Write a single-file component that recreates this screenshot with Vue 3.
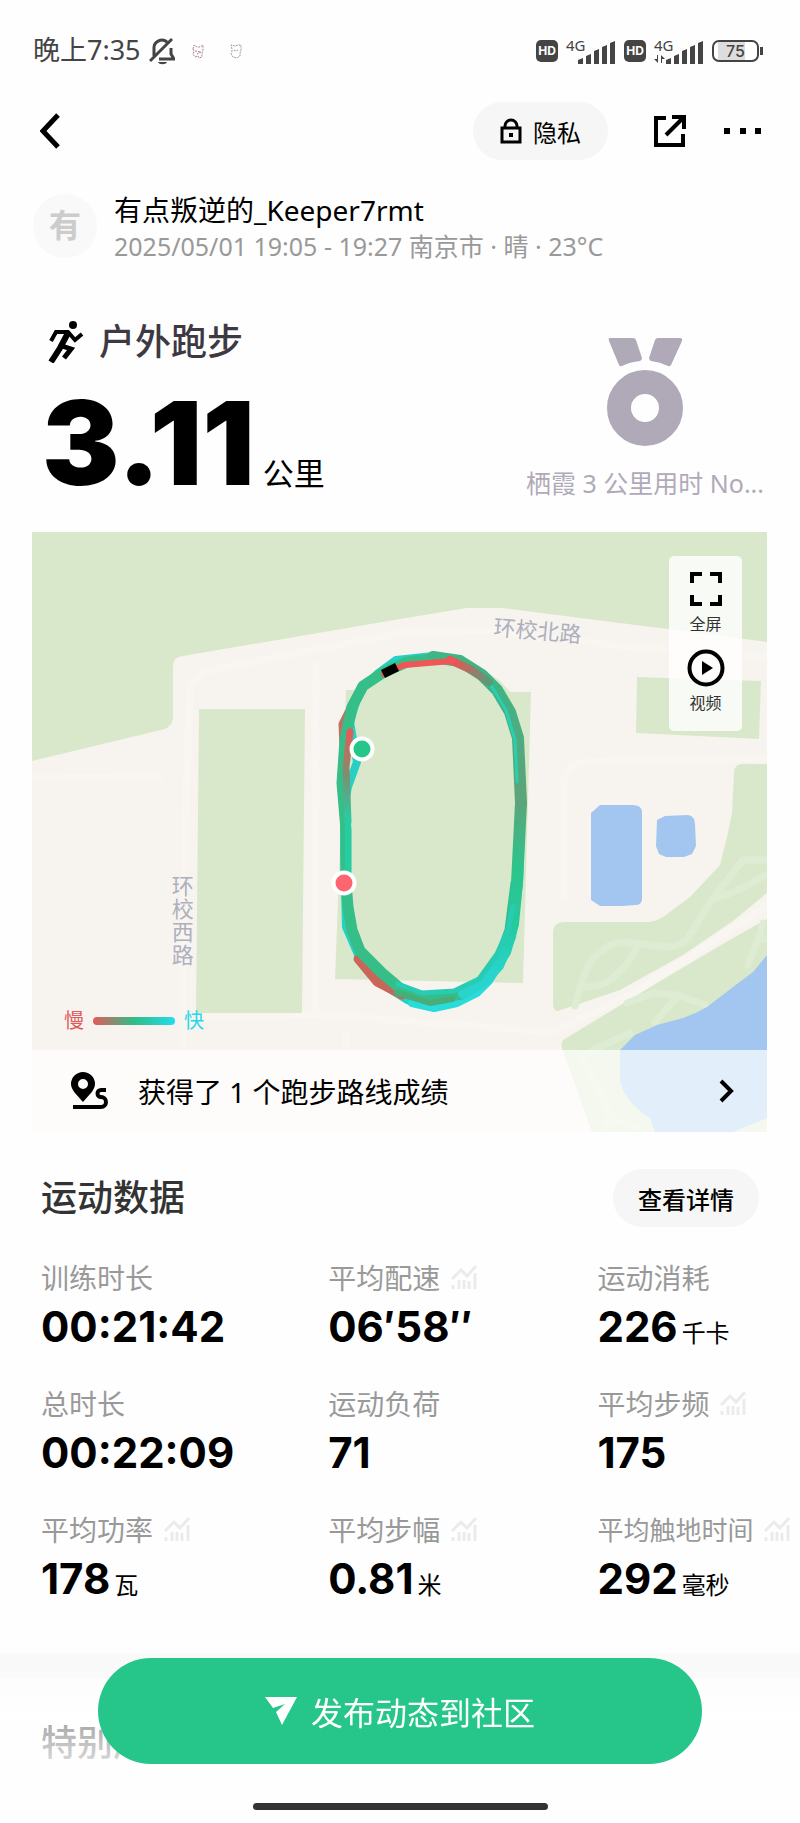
<template>
  <div class="run-page">
    <!-- 系统状态栏 -->
    <div class="status-bar">
      <div class="status-left">
        <span class="status-time">晚上7:35</span>
        <svg class="icon-mute" viewBox="0 0 26 28" fill="none" stroke="#444" stroke-width="3">
          <path d="M5 19V12a8 8 0 0 1 13-7M10 22h15l-3-5v-6M1 24L23 2" />
          <path d="M9 25h9c-1 3-8 3-9 0z" fill="#444" stroke="none" />
        </svg>
        <svg class="icon-pet" viewBox="0 0 14 16" fill="none" stroke="#a5888c" stroke-dasharray="2 1">
          <path d="M2 6l1-4 3 2h3l3-2v5l-1 3v4l-3 1-1-2-3 1-2-3 1-3z" />
          <path d="M4 8l6 1-4 2" stroke="#c0777d" />
        </svg>
        <svg class="icon-pet" viewBox="0 0 14 16" fill="none" stroke="#999" stroke-dasharray="2 1">
          <path d="M3 6l-1-4 4 1 3-1 3 0v5l-1 3v3l-3 2-4-1-2-3 1-3zM5 7l2 1 2-1" />
        </svg>
      </div>
      <div class="status-right">
        <template v-for="sim in sims" :key="sim.id">
          <span class="hd-badge">HD</span>
          <svg class="icon-signal" viewBox="0 0 50 28" fill="#444">
            <text x="0" y="14" font-size="15">4G</text>
            <path v-if="sim.active" d="M4 18v8l-4-4h3v-4zM7 26v-8l4 4H8v4z" />
            <path d="M12 27v-4l5-2v6zM20 27v-8l5-2v10zM28 27V14l5-2v15zM36 27V10l5-2v19zM44 27V6l5-2v23z" />
          </svg>
        </template>
        <span class="battery"><span class="battery-box">75</span></span>
      </div>
    </div>

    <!-- 导航栏 -->
    <nav class="nav-bar">
      <button class="icon-btn" aria-label="返回">
        <svg width="20" height="36" viewBox="0 0 20 36" fill="none" stroke="#000" stroke-width="5">
          <path d="M18 2L3 18l15 16" />
        </svg>
      </button>
      <div class="nav-actions">
        <button class="pill privacy-btn">
          <svg width="22" height="26" viewBox="0 0 22 26" fill="none" stroke="#000" stroke-width="3">
            <path d="M2 10h18v14H2zM5 10V8a6 6 0 0 1 12 0v2" />
            <path d="M9 15h4v4H9z" fill="#000" stroke="none" />
          </svg>
          隐私
        </button>
        <button class="icon-btn" aria-label="分享">
          <svg width="34" height="34" viewBox="0 0 34 34" fill="none" stroke="#000" stroke-width="4">
            <path d="M13 4H3v27h27V20M19 3h12v12M31 3L13 21" />
          </svg>
        </button>
        <button class="icon-btn" aria-label="更多">
          <svg width="38" height="8" viewBox="0 0 38 8">
            <path d="M0 1h6v6H0zM16 1h6v6h-6zM31 1h6v6h-6z" />
          </svg>
        </button>
      </div>
    </nav>

    <!-- 用户信息 -->
    <section class="user-row">
      <div class="avatar">有</div>
      <div class="user-info">
        <div class="user-name">有点叛逆的_Keeper7rmt</div>
        <div class="user-meta">2025/05/01 19:05 - 19:27 南京市 · 晴 · 23°C</div>
      </div>
    </section>

    <!-- 概要 -->
    <section class="summary">
      <div class="summary-main">
        <h1 class="sport-type">
          <svg width="36" height="42" viewBox="0 0 36 42" fill="none" stroke="#000">
            <circle cx="25" cy="4" r="4" fill="#000" stroke="none" />
            <path d="M3 20l5-9h12l7 8 7-6" stroke-width="4" />
            <path d="M20 12l-8 15L3 41" stroke-width="6" />
            <path d="M14 25l9 3-7 9" stroke-width="5" />
          </svg>
          户外跑步
        </h1>
        <div class="distance">
          <span class="distance-value">3.11</span>
          <span class="distance-unit">公里</span>
        </div>
      </div>
      <div class="medal">
        <svg width="76" height="110" viewBox="0 0 76 110" fill="#b0aab8">
          <path d="M3 1h23q2 0 3 2l6 18q0 2-2 3-10 1-18 5-2 1-3-1L2 4q-1-3 1-3zM73 1H51q-2 0-3 2l-6 18q0 2 2 3 9 1 17 5 2 1 3-1L75 4q1-3-2-3z" />
          <circle cx="38" cy="71" r="26" fill="none" stroke="#b0aab8" stroke-width="24" />
        </svg>
        <span>栖霞 3 公里用时 No...</span>
      </div>
    </section>

    <!-- 轨迹地图 -->
    <section class="map-card">
      <svg class="map" viewBox="0 0 735 600">
        <defs>
          <linearGradient id="leftSide" gradientUnits="userSpaceOnUse" x1="0" y1="195" x2="0" y2="290">
            <stop offset="0" stop-color="#f05656" />
            <stop offset="0.5" stop-color="#7e8e70" />
            <stop offset="1" stop-color="#24cfa4" />
          </linearGradient>
          <linearGradient id="topSide" gradientUnits="userSpaceOnUse" x1="420" y1="0" x2="462" y2="0">
            <stop offset="0" stop-color="#ee5252" />
            <stop offset="1" stop-color="#4aa27c" />
          </linearGradient>
          <linearGradient id="rightSide" gradientUnits="userSpaceOnUse" x1="0" y1="150" x2="0" y2="440">
            <stop offset="0" stop-color="#3fb484" />
            <stop offset="0.4" stop-color="#5da479" />
            <stop offset="0.65" stop-color="#2cc48c" />
            <stop offset="0.85" stop-color="#24cba0" />
            <stop offset="1" stop-color="#28d4cc" />
          </linearGradient>
        </defs>
        <rect width="735" height="600" fill="#f7f4ef" />

        <!-- 道路 -->
        <g fill="none" stroke="#f9f6f2" stroke-width="7">
          <path d="M0 246L130 245M150 600L153 290 158 160Q160 144 180 138L368 101 450 98 600 115 735 126" />
          <path d="M284 130L283 482M164 485L284 482 520 500M520 500L600 462 735 374M314 500V600" />
          <path d="M532 370V248Q534 231 552 230L735 226" />
        </g>

        <!-- 绿地 -->
        <g fill="#d9e8ca">
          <path d="M0 0H735V110L635 97 471 76H435L368 87 151 124Q141 125 141 134V186Q140 194 133 197L0 229z" />
          <path d="M167 177H273L270 481H164z" />
          <path d="M314 158H325L345 143 370 130 401 126 430 128 455 140 468 149 478 160H499L491 451 303 447z" />
          <path d="M605 145L729 149 727 207 604 201z" />
          <path d="M735 232H710Q703 232 702 240L700 281 695 305 688 333 658 365 631 385Q625 389 618 390H531Q521 391 521 400V472Q521 479 526 479L588 458 651 423 701 389 735 361z" />
          <path d="M735 387L701 406 635 445 531 508Q529 512 530 516L560 600H735z" />
        </g>
        <g fill="none" stroke="#dfecd4" stroke-width="7" stroke-linecap="round" stroke-linejoin="round">
          <path d="M733 328H711L681 366 656 406Q650 414 635 415L601 411Q580 409 572 417 560 425 555 436L548 455 543 474" />
          <path d="M681 366Q701 363 733 343M606 411Q600 432 575 450 562 456 548 455" />
          <path d="M595 471L621 461 645 463 673 473M645 465L623 490M598 501L561 518Q550 525 551 531L571 565 578 586 608 596M578 586L570 600" />
          <path d="M731 391L726 408 716 433M726 408L735 406" />
        </g>

        <!-- 水域 -->
        <g fill="#a2c6f0">
          <path d="M735 423L721 440 701 455 675 475Q663 482 651 486L625 493 603 503 588 518V545Q588 555 595 565 605 579 618 586L623 600H701L735 586z" />
          <path d="M568 273H600Q610 273 610 280V368Q609 373 604 373L590 374H568L559 368V281z" />
          <path d="M633 284L656 283Q663 284 663 292L664 314 660 322 652 325H634L627 322 624 314 625 288z" />
        </g>

        <text class="road-name" x="461" y="103" transform="rotate(5 461 103)">环校北路</text>

        <!-- 跑步轨迹 -->
        <g fill="none" stroke-linejoin="round" stroke-linecap="round">
          <path d="M316 255L325 230 318 190 327 160 345 142 364 128 401 124 428 128 448 140 466 162 482 188 488 230 490 271 487 351 480 405 468 434 448 456 425 467 402 474 375 468 350 452 327 425 314 395 312 320 312 275z" stroke="#28d0c4" stroke-width="8" />
          <path d="M466 430L457 449 445 461 425 471 402 476 380 471" stroke="#28dcdc" stroke-width="8" />
          <path d="M321 170L310 192 311 215" stroke="#bd7263" stroke-width="7" />
          <path d="M326 427L345 450 370 463" stroke="#c9665a" stroke-width="9" />
          <path d="M401 127L375 130 352 140 331 154 320 175 313 208 310 251 314 298 314 351 316 375 320 398 328 419 350 441 370 458 398 467 430 462 452 448 469 423 478 398 484 351" stroke="#35be88" stroke-width="11" />
          <path d="M401 125L428 129 450 143 465 158 478 180 486 206 489 271 485 351 481 392 473 420 457 445 432 461" stroke="url(#rightSide)" stroke-width="12" />
          <path d="M458 152L474 178 483 208 485 250" stroke="#28cfb2" stroke-width="3" />
          <path d="M481 375L476 398 465 422 447 447 422 459 390 461 366 452" stroke="#28ccb4" stroke-width="5" />
          <path d="M365 461L398 471 420 467" stroke="#49ad78" stroke-width="6" />
          <path d="M318 200L314 235 316 290" stroke="url(#leftSide)" stroke-width="7" />
          <path d="M316 290V351" stroke="#25cda2" stroke-width="6" />
          <path d="M418 128L440 138 457 150" stroke="url(#topSide)" stroke-width="8" />
          <path d="M352 142L372 133 420 129" stroke="#f05656" stroke-width="6" />
          <path d="M351 142L365 135" stroke="#000" stroke-width="9" stroke-linecap="butt" />
        </g>
        <g stroke="#fff" stroke-width="4">
          <circle cx="330" cy="217" r="10.5" fill="#26c68a" />
          <circle cx="312" cy="351" r="10.5" fill="#fd6670" />
        </g>
      </svg>

      <div class="road-west">环校西路</div>

      <div class="map-tools">
        <button class="tool-btn">
          <svg width="34" height="38" viewBox="0 0 34 38" fill="none" stroke="#000" stroke-width="4">
            <path d="M13 4H3v9M21 4h10v9M13 34H3v-9M21 34h10v-9" />
          </svg>
          全屏
        </button>
        <button class="tool-btn">
          <svg width="38" height="38" viewBox="0 0 38 38">
            <circle cx="19" cy="19" r="16.5" fill="none" stroke="#000" stroke-width="4" />
            <path d="M15 12v14l11-7z" />
          </svg>
          视频
        </button>
      </div>

      <div class="pace-legend">
        <span class="slow">慢</span>
        <span class="legend-bar"></span>
        <span class="fast">快</span>
      </div>

      <a class="route-link" href="#routes">
        <svg width="38" height="38" viewBox="0 0 38 38">
          <path fill-rule="evenodd" d="M13 0a12 12 0 0 1 12 12c0 6-6 11-12 18C7 23 1 18 1 12A12 12 0 0 1 13 0zm0 7a5 5 0 1 0 0 10 5 5 0 0 0 0-10z" />
          <path d="M36 18h-5a3.5 3.5 0 0 0 0 7a5 5 0 0 1 0 10H3" fill="none" stroke="#000" stroke-width="4" />
        </svg>
        <span class="route-text">获得了 1 个跑步路线成绩</span>
        <svg width="16" height="24" viewBox="0 0 16 24" fill="none" stroke="#000" stroke-width="4">
          <path d="M2 2l10 10L2 22" />
        </svg>
      </a>
    </section>

    <!-- 运动数据 -->
    <section class="stats">
      <div class="stats-header">
        <h2 class="section-title">运动数据</h2>
        <button class="pill detail-btn">查看详情</button>
      </div>
      <dl class="stats-grid">
        <div v-for="item in stats" :key="item.label" class="stat-item">
          <dt class="stat-label" :class="{ small: item.label.length > 4 }">
            {{ item.label }}
            <svg v-if="item.chart" width="26" height="24" viewBox="0 0 26 24" fill="none" stroke="#ebebeb">
              <path d="M1 14l9-9 6 6L25 1" stroke-width="3" />
              <path d="M2 24v-4M8 24v-9M13 24v-9M18 24v-8M24 24V8" stroke-width="3" />
            </svg>
          </dt>
          <dd class="stat-value">
            {{ item.value }}<span v-if="item.unit" class="stat-unit">{{ item.unit }}</span>
          </dd>
        </div>
      </dl>
    </section>

    <section class="achievement">
      <h2 class="section-title">特别成就</h2>
    </section>

    <!-- 底部发布按钮 -->
    <footer class="bottom-bar">
      <button class="publish-btn">
        <svg width="32" height="28" viewBox="0 0 32 28" fill="#fff">
          <path d="M0 0h32L17 28 11 15l9-8-12 4z" />
        </svg>
        发布动态到社区
      </button>
      <div class="home-indicator"></div>
    </footer>
  </div>
</template>

<script setup>
import { ref } from 'vue'

const sims = [
  { id: 1, active: false },
  { id: 2, active: true }
]

// 运动数据
const stats = ref([
  { label: '训练时长', value: '00:21:42' },
  { label: '平均配速', value: '06′58′′', chart: true },
  { label: '运动消耗', value: '226', unit: '千卡' },
  { label: '总时长', value: '00:22:09' },
  { label: '运动负荷', value: '71' },
  { label: '平均步频', value: '175', chart: true },
  { label: '平均功率', value: '178', unit: '瓦', chart: true },
  { label: '平均步幅', value: '0.81', unit: '米', chart: true },
  { label: '平均触地时间', value: '292', unit: '毫秒', chart: true }
])
</script>

<style>
body {
  background: #fefefe;
}
</style>

<style scoped>
.run-page {
  height: 100vh;
  overflow: hidden;
  background: #fefefe;
  color: #000;
  font-family: 'Noto Sans', 'Noto Sans CJK SC', sans-serif;
}

button {
  border: none;
  background: none;
  padding: 0;
  font-family: inherit;
  color: inherit;
  cursor: pointer;
}

svg {
  display: block;
  flex-shrink: 0;
}

/* Status bar */
.status-bar {
  display: flex;
  justify-content: space-between;
  align-items: center;
  height: 102px;
  padding: 0 37px 0 33px;
  box-sizing: border-box;
  color: #444;
}

.status-left {
  display: flex;
  align-items: center;
}

.status-time {
  font-size: 27px;
  line-height: 32px;
  padding-bottom: 2px;
}

.icon-mute {
  width: 26px;
  height: 28px;
  margin: 0 16px 0 8px;
}

.icon-pet {
  width: 14px;
  height: 16px;
  margin-right: 24px;
}

.status-right {
  display: flex;
  align-items: center;
  gap: 8px;
}

.hd-badge {
  width: 22px;
  height: 22px;
  line-height: 22px;
  border-radius: 5px;
  background: #444;
  color: #fff;
  font-family: Inter, sans-serif;
  font-size: 12px;
  font-weight: 700;
  text-align: center;
}

.icon-signal {
  width: 50px;
  height: 28px;
  overflow: visible;
}

.battery {
  display: flex;
  align-items: center;
}

.battery::after {
  content: '';
  width: 3px;
  height: 8px;
  margin-left: 1px;
  background: #444;
}

.battery-box {
  width: 47px;
  height: 22px;
  line-height: 18px;
  box-sizing: border-box;
  border: 2px solid #444;
  border-radius: 7px;
  background: linear-gradient(90deg, #fff 4px, #ddd 4px, #ddd 72%, #fff 72%);
  font-family: Inter, sans-serif;
  font-size: 16px;
  font-weight: 500;
  text-align: center;
}

/* Nav */
.nav-bar {
  display: flex;
  justify-content: space-between;
  align-items: center;
  padding: 0 38px 0 40px;
}

.nav-actions {
  display: flex;
  align-items: center;
}

.nav-actions .icon-btn:nth-child(2) {
  margin: 0 37px 0 45px;
}

.pill {
  display: flex;
  align-items: center;
  justify-content: center;
  height: 58px;
  border-radius: 30px;
  background: #f6f6f6;
  font-size: 24px;
}

.privacy-btn {
  gap: 11px;
  padding: 0 27px;
}

/* User */
.user-row {
  display: flex;
  align-items: center;
  gap: 17px;
  margin-top: 30px;
  padding: 0 33px;
}

.avatar {
  width: 64px;
  height: 64px;
  line-height: 62px;
  border-radius: 50%;
  background: #f9f9f9;
  color: #ccc;
  font-size: 32px;
  font-weight: 700;
  text-align: center;
}

.user-name {
  font-size: 28px;
  line-height: 40px;
}

.user-meta {
  font-size: 25px;
  line-height: 32px;
  color: #999;
}

/* Summary */
.summary {
  display: flex;
  justify-content: space-between;
  align-items: flex-end;
  margin-top: 52px;
  padding: 0 36px 0 42px;
}

.sport-type {
  display: flex;
  align-items: center;
  gap: 15px;
  margin: 0;
  padding-left: 6px;
  font-size: 36px;
  line-height: 56px;
  font-weight: 500;
  color: #3d3943;
}

.distance {
  display: flex;
  align-items: baseline;
  gap: 8px;
  margin-top: 7px;
}

.distance-value {
  font-family: Inter, sans-serif;
  font-size: 116px;
  line-height: 132px;
  font-weight: 900;
}

.distance-unit {
  font-size: 31px;
}

.medal {
  display: flex;
  flex-direction: column;
  align-items: center;
  gap: 18px;
  padding-bottom: 8px;
  font-size: 25px;
  line-height: 36px;
  color: #b0aab8;
}

/* Map */
.map-card {
  position: relative;
  margin: 23px 33px 0 32px;
}

.map {
  width: 100%;
  height: auto;
}

.road-name {
  font-size: 22px;
  fill: #aeb0bd;
}

.road-west {
  position: absolute;
  left: 19%;
  top: 57%;
  width: 22px;
  font-size: 22px;
  line-height: 23px;
  word-break: break-all;
  color: #aeb0bd;
}

.map-tools {
  position: absolute;
  top: 24px;
  right: 25px;
  display: flex;
  flex-direction: column;
  gap: 13px;
  width: 73px;
  padding: 14px 0 16px;
  box-sizing: border-box;
  border-radius: 5px;
  background: rgba(255, 255, 255, 0.8);
}

.tool-btn {
  display: flex;
  flex-direction: column;
  align-items: center;
  gap: 4px;
  font-size: 16px;
  line-height: 24px;
  color: #333;
}

.pace-legend {
  position: absolute;
  left: 32px;
  bottom: 96px;
  display: flex;
  align-items: center;
  gap: 9px;
  font-size: 20px;
  line-height: 30px;
}

.slow {
  color: #e05a60;
}

.fast {
  color: #28d8e8;
}

.legend-bar {
  width: 82px;
  height: 8px;
  border-radius: 4px;
  background: linear-gradient(90deg, #e35a5c, #30bd86 50%, #24dcee);
}

.route-link {
  position: absolute;
  left: 0;
  right: 0;
  bottom: 0;
  display: flex;
  align-items: center;
  height: 82px;
  padding: 0 32px 0 38px;
  background: rgba(255, 255, 255, 0.7);
  color: #000;
  font-size: 28px;
  text-decoration: none;
}

.route-text {
  flex: 1;
  margin-left: 30px;
}

/* Stats */
.stats {
  padding: 37px 41px 0 41px;
}

.stats-header {
  display: flex;
  justify-content: space-between;
  align-items: center;
}

.section-title {
  margin: 0;
  font-size: 36px;
  line-height: 52px;
  font-weight: 500;
  color: #333;
}

.detail-btn {
  padding: 0 25px;
  font-weight: 500;
}

.stats-grid {
  display: grid;
  grid-template-columns: 40% 37.5% 1fr;
  grid-auto-rows: 126px;
  margin: 30px 0 0;
}

.stat-label {
  display: flex;
  align-items: center;
  gap: 11px;
  height: 40px;
  font-size: 28px;
  white-space: nowrap;
  color: #999;
}

.stat-label.small {
  font-size: 26px;
}

.stat-value {
  display: flex;
  align-items: baseline;
  gap: 4px;
  margin: 0;
  font-family: Inter, 'Noto Sans CJK SC', sans-serif;
  font-size: 42px;
  line-height: 60px;
  font-weight: 700;
}

.stat-unit {
  font-family: 'Noto Sans CJK SC', sans-serif;
  font-size: 24px;
  font-weight: 400;
}

/* Achievement */
.achievement {
  margin-top: 18px;
  padding: 39px 41px;
  border-top: 25px solid #f9f9f9;
}

/* Bottom */
.bottom-bar {
  position: fixed;
  left: 0;
  right: 0;
  bottom: 0;
  display: flex;
  flex-direction: column;
  align-items: center;
  gap: 39px;
  padding: 34px 98px 13px;
  background: linear-gradient(rgba(254, 254, 254, 0), #fefefe 85%);
}

.publish-btn {
  display: flex;
  align-items: center;
  justify-content: center;
  gap: 14px;
  width: 100%;
  height: 106px;
  border-radius: 53px;
  background: #26c68a;
  color: #fff;
  font-size: 32px;
}

.home-indicator {
  width: 295px;
  height: 7px;
  border-radius: 4px;
  background: #333;
}
</style>
